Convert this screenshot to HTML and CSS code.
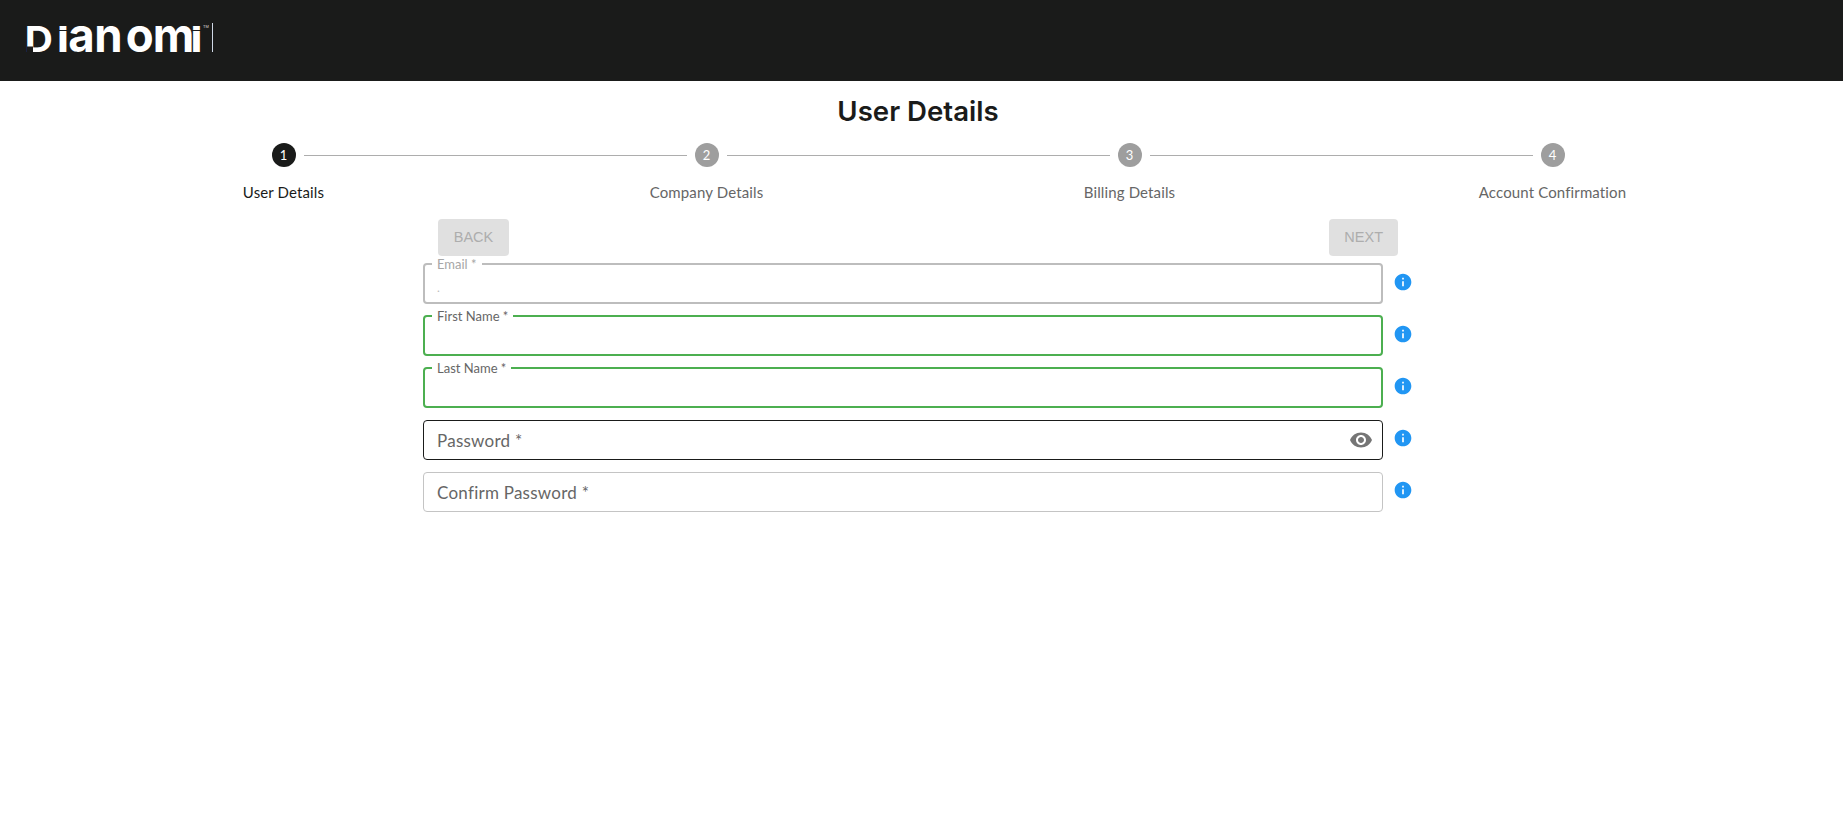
FILE: index.html
```html
<!DOCTYPE html>
<html lang="en">
<head>
<meta charset="utf-8">
<title>User Details</title>
<link rel="stylesheet" href="styles.css">
</head>
<body>
<header class="topbar">
  <svg class="logo" width="190" height="30" viewBox="0 0 190 30" role="img" aria-label="Dianomi">
    <text class="logo-cap" x="-3" y="29" transform="scale(1.08 1)">D</text>
    <rect class="logo-cut" x="-1" y="23.5" width="6" height="7"/>
    <text class="logo-low" y="29" x="30.3 42.4 69.8 102.8 131.4 170.8" transform="scale(.95 1)">ianomi</text>
    <rect class="logo-cut" x="30" y="-14" width="10" height="17"/>
    <rect class="logo-cut" x="164" y="-14" width="10" height="17"/>
    <rect class="logo-cut" x="30" y="7" width="10" height="1"/>
    <rect class="logo-cut" x="164" y="7" width="10" height="1"/>
    <text class="logo-tm" x="175" y="5">TM</text>
    <rect class="logo-bar" x="184" y="0" width="1" height="29"/>
  </svg>
</header>
<main class="page">
  <h1 class="title">User Details</h1>
  <ol class="stepper">
    <li class="step active">
      <div class="step-head"><span class="line none"></span><span class="dot">1</span><span class="line"></span></div>
      <span class="step-label">User Details</span>
    </li>
    <li class="step">
      <div class="step-head"><span class="line"></span><span class="dot">2</span><span class="line"></span></div>
      <span class="step-label">Company Details</span>
    </li>
    <li class="step">
      <div class="step-head"><span class="line"></span><span class="dot">3</span><span class="line"></span></div>
      <span class="step-label">Billing Details</span>
    </li>
    <li class="step">
      <div class="step-head"><span class="line"></span><span class="dot">4</span><span class="line none"></span></div>
      <span class="step-label">Account Confirmation</span>
    </li>
  </ol>
  <form class="form">
    <div class="actions">
      <button type="button" class="btn" disabled>BACK</button>
      <button type="button" class="btn" disabled>NEXT</button>
    </div>
    <div class="row">
      <div class="field filled neutral"><span class="float">Email *</span><span class="value">.</span></div>
      <svg class="info" viewBox="0 0 24 24"><path d="M12 2C6.48 2 2 6.48 2 12s4.48 10 10 10 10-4.48 10-10S17.52 2 12 2zm1 15h-2v-6h2v6zm0-8h-2V7h2v2z"/></svg>
    </div>
    <div class="row">
      <div class="field filled valid"><span class="float">First Name *</span></div>
      <svg class="info" viewBox="0 0 24 24"><path d="M12 2C6.48 2 2 6.48 2 12s4.48 10 10 10 10-4.48 10-10S17.52 2 12 2zm1 15h-2v-6h2v6zm0-8h-2V7h2v2z"/></svg>
    </div>
    <div class="row">
      <div class="field filled valid"><span class="float">Last Name *</span></div>
      <svg class="info" viewBox="0 0 24 24"><path d="M12 2C6.48 2 2 6.48 2 12s4.48 10 10 10 10-4.48 10-10S17.52 2 12 2zm1 15h-2v-6h2v6zm0-8h-2V7h2v2z"/></svg>
    </div>
    <div class="row">
      <div class="field dark">
        <span class="placeholder">Password *</span>
        <svg class="eye" viewBox="0 0 24 24"><path d="M12 4.5C7 4.5 2.73 7.61 1 12c1.73 4.39 6 7.5 11 7.5s9.27-3.11 11-7.5c-1.73-4.39-6-7.5-11-7.5zM12 17c-2.76 0-5-2.24-5-5s2.24-5 5-5 5 2.24 5 5-2.24 5-5 5zm0-8c-1.66 0-3 1.34-3 3s1.34 3 3 3 3-1.34 3-3-1.34-3-3-3z"/></svg>
      </div>
      <svg class="info" viewBox="0 0 24 24"><path d="M12 2C6.48 2 2 6.48 2 12s4.48 10 10 10 10-4.48 10-10S17.52 2 12 2zm1 15h-2v-6h2v6zm0-8h-2V7h2v2z"/></svg>
    </div>
    <div class="row">
      <div class="field"><span class="placeholder">Confirm Password *</span></div>
      <svg class="info" viewBox="0 0 24 24"><path d="M12 2C6.48 2 2 6.48 2 12s4.48 10 10 10 10-4.48 10-10S17.52 2 12 2zm1 15h-2v-6h2v6zm0-8h-2V7h2v2z"/></svg>
    </div>
  </form>
</main>
</body>
</html>
```
FILE: styles.css
```css
* { box-sizing: border-box; }
html, body { margin: 0; background: #fff; }
body { font-family: "Lato", "Liberation Sans", sans-serif; color: #1a1b1a; }

.topbar { height: 81px; background: #1a1b1a; padding: 23px 0 0 28px; }
.logo { display: block; overflow: visible; }
.logo-cap { font: 700 36px "Inter", sans-serif; fill: #fff; }
.logo-cut { fill: #1a1b1a; }
.logo-low { font: 700 48px "Inter", sans-serif; fill: #fff; }
.logo-tm { font: 400 4px "Liberation Sans", sans-serif; fill: #ddd; }
.logo-bar { fill: #cfd8e6; }

.page { width: 1836px; display: flex; flex-direction: column; align-items: center; }
.title { margin: 13px 0 0; font-family: "Inter", sans-serif; font-size: 27.6px; line-height: 34px; font-weight: 600; }

.stepper { list-style: none; display: grid; grid-template-columns: repeat(4, 423px); margin: 15px 0 0; padding: 0; }
.step { display: flex; flex-direction: column; align-items: center; }
.step-head { display: flex; align-items: center; gap: 8px; width: 100%; height: 24px; }
.line { flex: 1; height: 1px; background: #adadad; }
.line.none { background: transparent; }
.dot { width: 24px; height: 24px; border-radius: 50%; background: #9e9e9e; color: #fff; font-size: 13px; display: flex; align-items: center; justify-content: center; }
.active .dot { background: #1a1b1a; }
.step-label { margin-top: 16px; font-size: 15px; line-height: 18px; letter-spacing: .13px; color: #666; }
.active .step-label { color: #1a1b1a; }

.form { width: 990px; margin-top: 18px; }
.actions { display: flex; justify-content: space-between; margin: 0 15px 8px; }
.btn { height: 37px; padding: 0 15px 2px; border: 0; border-radius: 4px; background: #e0e0e0; color: #adadad; font: 14.5px "Liberation Sans", sans-serif; }
.btn:first-child { min-width: 71px; }
.row { display: flex; align-items: center; gap: 10px; height: 40px; margin-bottom: 12px; }
.field { position: relative; flex: 0 0 960px; height: 40px; border: 1px solid #c4c4c4; border-radius: 4px; display: flex; align-items: center; padding-left: 13px; }
.field.filled { border-width: 2px; height: 41px; margin-top: -1px; align-self: flex-start; padding-left: 12px; }
.field.neutral { border-color: #bdbdbd; }
.field.valid { border-color: #4caf50; }
.field.dark { border-color: #1a1b1a; }
.float { position: absolute; left: 7px; top: -9px; padding: 0 5px; background: #fff; font-size: 13px; line-height: 16px; color: #666; }
.neutral .float { color: #a6a6a6; }
.value { font-size: 12px; color: #bbb; margin-top: 8px; }
.placeholder { font-size: 17px; letter-spacing: .25px; color: #666; flex: 1; }
.eye { width: 24px; height: 24px; fill: #757575; margin-right: 9px; }
.info { width: 20px; height: 20px; fill: #2196f3; flex: none; margin-top: -4px; }
```
